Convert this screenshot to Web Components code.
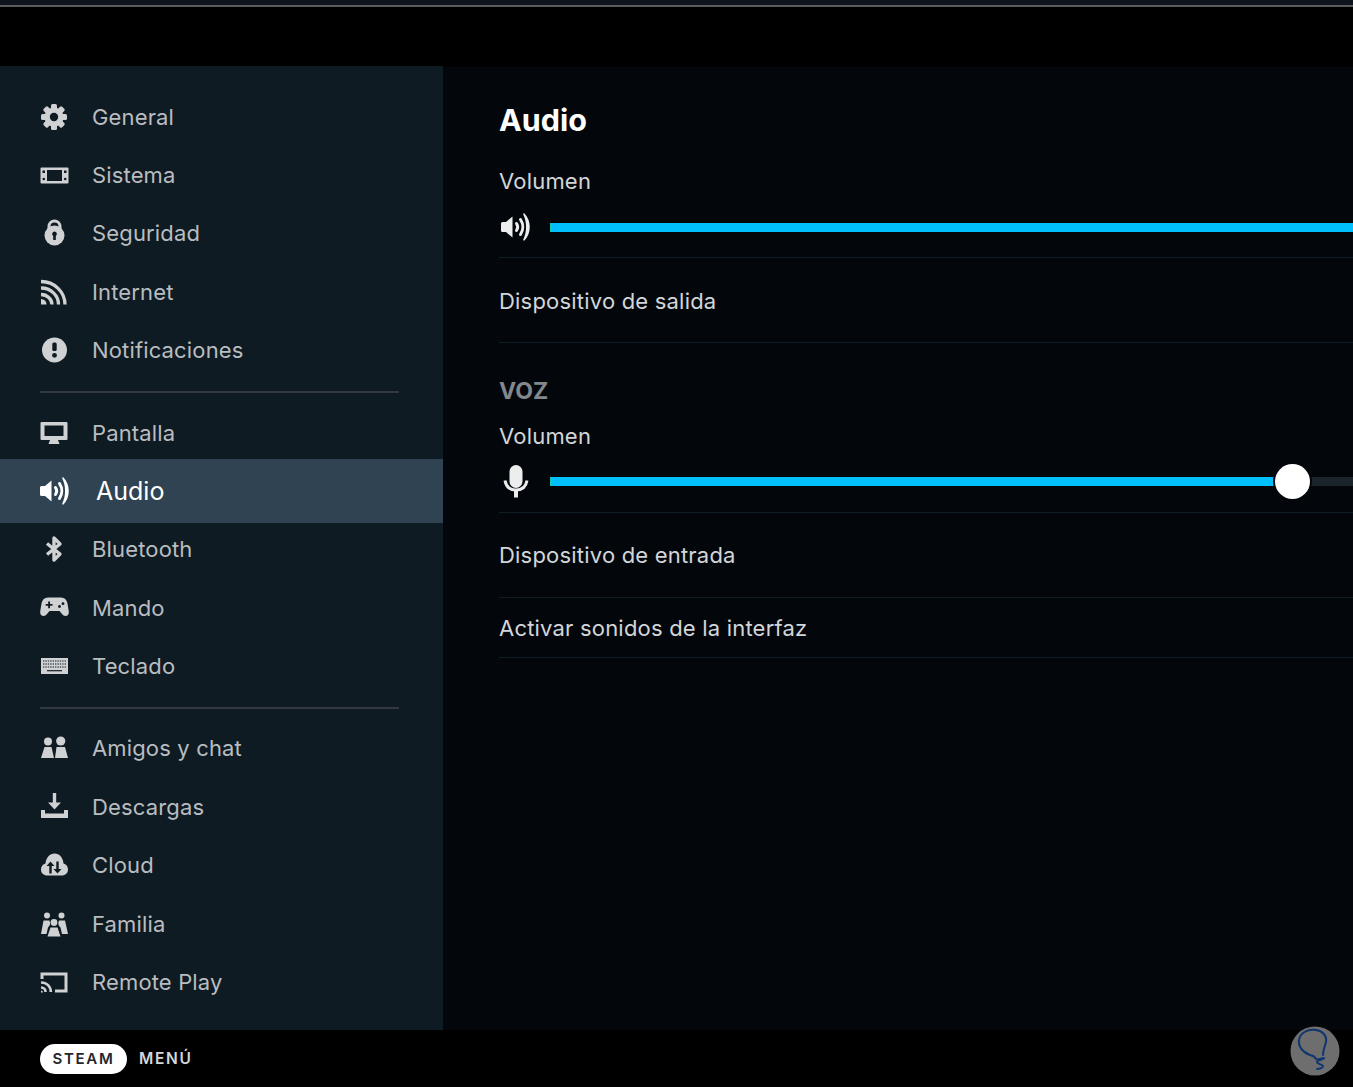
<!DOCTYPE html>
<html lang="es">
<head>
<meta charset="utf-8">
<title>Audio</title>
<style>
  html, body { margin: 0; padding: 0; background: #000; }
  body { font-family: Inter, "Noto Sans", "Liberation Sans", sans-serif; overflow: hidden; }
</style>
</head>
<body>
<script>
const ICONS = {
  general: `<g fill="currentColor"><circle cx="14" cy="14" r="9.6"/><rect x="11" y="1" width="6" height="26" rx="1.5"/><rect x="11" y="1" width="6" height="26" rx="1.5" transform="rotate(45 14 14)"/><rect x="11" y="1" width="6" height="26" rx="1.5" transform="rotate(90 14 14)"/><rect x="11" y="1" width="6" height="26" rx="1.5" transform="rotate(135 14 14)"/></g><circle cx="14" cy="14" r="4.2" fill="var(--hole)"/>`,
  sistema: `<path fill="currentColor" fill-rule="evenodd" d="M1.5 6.5h26a1 1 0 0 1 1 1v14a1 1 0 0 1-1 1h-26a1 1 0 0 1-1-1v-14a1 1 0 0 1 1-1zM7 9v11h15V9z"/><g fill="var(--hole)"><rect x="2.5" y="9.5" width="2.5" height="2.5"/><circle cx="3.8" cy="18" r="1.3"/><rect x="24" y="9.5" width="2.5" height="2.5"/><circle cx="25.2" cy="18" r="1.3"/></g>`,
  seguridad: `<path fill="none" stroke="currentColor" stroke-width="3" d="M9 12V7.5a5.5 5.5 0 0 1 11 0V12"/><circle cx="14.5" cy="16.5" r="10" fill="currentColor"/><path fill="var(--hole)" d="M14.5 12.5a2.4 2.4 0 0 1 1.3 4.4V21h-2.6v-4.1a2.4 2.4 0 0 1 1.3-4.4z"/>`,
  internet: `<g fill="none" stroke="currentColor" stroke-width="3.3"><path d="M1 3.5c13.5 0 24 10.5 24 23"/><path d="M1 10c10 0 17.5 7.5 17.5 16.5"/><path d="M1 16.5c6 0 11 4.5 11 10"/></g><path fill="currentColor" d="M1 21a5.5 5.5 0 0 1 5.5 5.5H1z"/>`,
  notif: `<circle cx="14.5" cy="14" r="12.5" fill="currentColor"/><rect x="12.3" y="6.5" width="4.4" height="8.5" rx="1.5" fill="var(--hole)"/><circle cx="14.5" cy="19.3" r="2.4" fill="var(--hole)"/>`,
  pantalla: `<path fill="currentColor" fill-rule="evenodd" d="M1.5 3h25a1 1 0 0 1 1 1v16a1 1 0 0 1-1 1H18l1.5 4h-11L10 21H1.5a1 1 0 0 1-1-1V4a1 1 0 0 1 1-1zM4.5 6.5V17h19V6.5z"/>`,
  audio: `<path fill="currentColor" d="M1.5 9H5l6.5-5.5v21L5 19H1.5A1.5 1.5 0 0 1 0 17.5v-7A1.5 1.5 0 0 1 1.500 9z"/><g fill="none" stroke="currentColor" stroke-linecap="round" stroke-width="3"><path d="M15.5 10.5c1.500 2.200 1.500 4.800 0 7"/><path d="M19.5 6.500c3 4.500 3 10.500 0 15"/></g><path fill="currentColor" d="M23.5.5C30.500 8 30.500 20 23.500 27.500c-.6.400-1.500-.2-1.200-1C26 19 26 9 22.300 1.500c-.3-.8.6-1.400 1.200-1z"/>`,
  bluetooth: `<path fill="none" stroke="currentColor" stroke-width="3.4" stroke-linejoin="round" d="M7 8.5 20 19l-6 6V3l6 6L7 19.5"/>`,
  mando: `<path fill="currentColor" d="M8 3.500h13c3.500 0 5.700 2 6.500 6l1.300 8c.4 2.700-1.100 4.500-3.300 4.500-1.500 0-2.500-.8-3.500-2l-2.500-3H9.500l-2.500 3c-1 1.200-2 2-3.500 2-2.200 0-3.700-1.800-3.300-4.500l1.300-8c.8-4 3-6 6.500-6z"/><path fill="var(--hole)" d="M8.200 7.500h1.800v2.500h2.500v1.800H10v2.500H8.200v-2.500H5.700V10h2.500z"/><circle cx="19.500" cy="12.500" r="1.400" fill="var(--hole)"/><circle cx="23" cy="9.700" r="1.400" fill="var(--hole)"/>`,
  teclado: `<rect x="1" y="6" width="27" height="16" fill="currentColor"/><g stroke="var(--hole)" stroke-width="1.1" stroke-dasharray="1.4 1"><path d="M3 9h23M3 12h23M3 15h23"/></g><path stroke="var(--hole)" stroke-width="1.2" d="M7 18.700h15"/>`,
  amigos: `<g fill="currentColor"><circle cx="8" cy="7.500" r="4"/><circle cx="20.700" cy="7" r="4.600"/><path d="M4.500 13h7l2.500 11H1zM16.500 13h8.500L28 24H15z"/></g>`,
  descargas: `<g fill="currentColor"><path d="M12.800 0h3.400v9.500H21L14.500 16.500 8 9.500h4.800z"/><path d="M1 17h4v3.500h19V17h4v8H1z"/></g>`,
  cloud: `<g transform="translate(0 -1.500)"><path fill="currentColor" d="M7.500 26C3.500 26 1 23.500 1 20c0-3.200 2-5.500 4.500-6C6 8 10 4 14.500 4c5 0 8.500 4 9 10 2.500.5 4.500 2.800 4.500 6 0 3.500-2.500 6-6.500 6z"/><path fill="var(--hole)" d="M10.500 12l4 4.500h-2.800V24H9.300v-7.500H6.500zM17.500 24l-4-4.500h2.800V12h2.400v7.500h2.800z"/></g>`,
  familia: `<g fill="currentColor"><circle cx="7" cy="5.500" r="3"/><circle cx="21.500" cy="5.500" r="3"/><circle cx="14" cy="12.500" r="3.400"/><path d="M3.500 10.500h6l.6 2.500c.3 2-1 3-2.100 4.500l-1.500 6.500H1z"/><path d="M25 10.500h-6l-.6 2.500c-.3 2 1 3 2.100 4.500l1.500 6.500H28z"/><path d="M10.500 17.500h7l3 9h-13z"/></g>`,
  remote: `<g fill="none" stroke="currentColor"><path stroke-width="3" d="M2 11V6h24v17H15"/><path stroke-width="2.600" d="M1 14.500c5.800 0 9.800 4 9.800 9.500"/><path stroke-width="2.600" d="M1 19.500c2.600 0 4.500 1.800 4.500 4.500"/></g><path fill="currentColor" d="M1 22.500a2 2 0 0 1 2 2H1z"/>`,
  mic: `<rect x="6.500" y="0" width="13" height="23" rx="6.500" fill="currentColor"/><path fill="none" stroke="currentColor" stroke-width="3" d="M2 15.500c1 6 5 9.500 11 9.500s10-3.500 11-9.500"/><path fill="currentColor" d="M11 24h4v8.500h-4z"/>`
};

class SteamIcon extends HTMLElement {
  static get observedAttributes() { return ['name']; }

  constructor() {
    super();
    this.attachShadow({ mode: 'open' });
  }

  attributeChangedCallback() {
    const name = this.getAttribute('name');
    const mic = name === 'mic';
    const w = mic ? 26 : 29;
    const h = mic ? 33 : 28;
    this.shadowRoot.innerHTML = `
      <style>
        :host { display: block; width: ${w}px; height: ${h}px; line-height: 0; }
        svg { display: block; overflow: visible; }
      </style>
      <svg width="${w}" height="${h}" viewBox="0 0 ${w} ${h}">${ICONS[name] || ''}</svg>`;
  }
}
customElements.define('steam-icon', SteamIcon);

class NavItem extends HTMLElement {
  constructor() {
    super();
    this.attachShadow({ mode: 'open' });
    this.shadowRoot.innerHTML = `
      <style>
        :host {
          display: flex;
          align-items: center;
          height: 58.4px;
          padding-left: 40px;
          gap: 23px;
          color: #b9bdc0;
          font-size: 22px;
          letter-spacing: .15px;
          --hole: #0f1b23;
        }
        :host([active]) {
          height: 64px;
          margin: -2.8px 0;
          position: relative;
          background: #2f4352;
          color: #fff;
          font-size: 25px;
          letter-spacing: 0;
          gap: 27px;
          --hole: #2f4352;
        }
        steam-icon { color: #cfd1d2; flex: none; }
        :host([active]) steam-icon { color: #fff; }
      </style>
      <steam-icon></steam-icon>
      <slot></slot>`;
    this.shadowRoot.querySelector('steam-icon').setAttribute('name', this.getAttribute('icon'));
  }
}
customElements.define('nav-item', NavItem);

class NavDivider extends HTMLElement {
  constructor() {
    super();
    this.attachShadow({ mode: 'open' });
    this.shadowRoot.innerHTML = `
      <style>
        :host { display: block; height: 2px; margin: 11.6px 44px 10.4px 40px; background: #33393f; }
      </style>`;
  }
}
customElements.define('nav-divider', NavDivider);

class SideNav extends HTMLElement {
  constructor() {
    super();
    this.attachShadow({ mode: 'open' });
    this.shadowRoot.innerHTML = `
      <style>
        :host {
          display: block;
          flex: none;
          width: 443px;
          padding-top: 21.4px;
          box-sizing: border-box;
          background: #0f1b23;
        }
      </style>
      <slot></slot>`;
  }
}
customElements.define('side-nav', SideNav);

class VolumeSlider extends HTMLElement {
  constructor() {
    super();
    this.attachShadow({ mode: 'open' });
    this.shadowRoot.innerHTML = `
      <style>
        :host {
          display: block;
          padding-bottom: 12px;
          border-bottom: 1px solid #0f1d26;
          color: #d3d6d8;
          font-size: 22px;
          line-height: 28px;
          letter-spacing: .2px;
          --hole: #03070c;
        }
        .control { display: flex; align-items: center; height: 36px; margin-top: var(--gap, 14px); }
        .slot { width: 51px; flex: none; display: flex; }
        steam-icon { color: #eceeee; }
        .track { flex: 1; height: 9px; position: relative; background: #19242b; }
        .fill { height: 100%; background: #00bfff; border-left: 2px solid #17c9b4; box-sizing: border-box; }
        .thumb {
          position: absolute;
          top: 50%;
          width: 35px;
          height: 35px;
          margin: -17.5px 0 0 -17.5px;
          border-radius: 50%;
          background: #fff;
          box-shadow: 0 0 0 2px #03070c;
        }
      </style>
      <div class="label"><slot></slot></div>
      <div class="control">
        <div class="slot"><steam-icon></steam-icon></div>
        <div class="track"><div class="fill"></div><div class="thumb"></div></div>
      </div>`;
    const icon = this.shadowRoot.querySelector('steam-icon');
    icon.setAttribute('name', this.getAttribute('icon'));
    icon.style.marginLeft = this.getAttribute('icon') === 'mic' ? '4px' : '2px';
    const fill = this.shadowRoot.querySelector('.fill');
    const thumb = this.shadowRoot.querySelector('.thumb');
    const at = this.getAttribute('thumb');
    if (at) {
      fill.style.width = (+at - 17) + 'px';
      thumb.style.left = at + 'px';
    } else {
      fill.style.width = '100%';
      thumb.style.display = 'none';
    }
  }
}
customElements.define('volume-slider', VolumeSlider);

class SettingRow extends HTMLElement {
  constructor() {
    super();
    this.attachShadow({ mode: 'open' });
    this.shadowRoot.innerHTML = `
      <style>
        :host {
          display: flex;
          align-items: center;
          box-sizing: border-box;
          border-bottom: 1px solid #0f1d26;
          color: #d3d6d8;
          font-size: 22px;
          letter-spacing: .2px;
        }
      </style>
      <slot></slot>`;
  }
}
customElements.define('setting-row', SettingRow);

class AudioPanel extends HTMLElement {
  constructor() {
    super();
    this.attachShadow({ mode: 'open' });
    this.shadowRoot.innerHTML = `
      <style>
        :host {
          display: block;
          flex: 1;
          min-width: 0;
          margin-top: 1px;
          padding: 35px 0 0 56px;
          background: #03070c;
          overflow: hidden;
        }
        h1 { margin: 0; font-size: 30.5px; line-height: 36px; font-weight: 700; color: #fff; }
        h2 {
          margin: 34px 0 17px;
          font-size: 23px;
          line-height: 28px;
          font-weight: 700;
          color: #83888c;
          text-transform: uppercase;
        }
        .first { margin-top: 29px; }
        .out { height: 85px; padding-top: 1px; }
        .in { height: 85px; }
        .ui { height: 60px; }
        .second { --gap: 13px; padding-bottom: 13px; }
      </style>
      <h1>Audio</h1>
      <volume-slider class="first" icon="audio">Volumen</volume-slider>
      <setting-row class="out">Dispositivo de salida</setting-row>
      <h2>Voz</h2>
      <volume-slider class="second" icon="mic" thumb="742.5">Volumen</volume-slider>
      <setting-row class="in">Dispositivo de entrada</setting-row>
      <setting-row class="ui">Activar sonidos de la interfaz</setting-row>`;
  }
}
customElements.define('audio-panel', AudioPanel);

class FooterBar extends HTMLElement {
  constructor() {
    super();
    this.attachShadow({ mode: 'open' });
    this.shadowRoot.innerHTML = `
      <style>
        :host {
          display: flex;
          align-items: center;
          flex: 1;
          gap: 12px;
          padding-left: 40px;
          background: #000;
          position: relative;
          color: #d5d7d8;
          font-size: 15.5px;
          font-weight: 600;
          letter-spacing: 1.7px;
        }
        .pill {
          display: flex;
          align-items: center;
          justify-content: center;
          width: 87px;
          height: 30px;
          border-radius: 15px;
          background: #fff;
          color: #23262b;
          font-size: 15px;
          letter-spacing: 1.7px;
        }
        .mark { position: absolute; right: 13px; top: -4px; width: 50px; height: 50px; }
      </style>
      <span class="pill">STEAM</span>
      <span>MENÚ</span>
      <svg class="mark" viewBox="0 0 50 50">
        <circle cx="25" cy="25" r="24.5" fill="#6e6e6e"/>
        <path fill="none" stroke="#10356f" stroke-width="2" stroke-linecap="round" stroke-linejoin="round"
          d="M20 29C12 26 8 20 9 14 10 7 17 3 26 4c7 1 11 6 10 12-1 4-3 8-3 13M20 29c3 .5 5 2 6 4 1 1 8-1 8-1 1 1-7 2-7 4 0 2 5 2 6 4 0 2-4 3-6 3"/>
      </svg>`;
  }
}
customElements.define('footer-bar', FooterBar);

class DeckScreen extends HTMLElement {
  constructor() {
    super();
    this.attachShadow({ mode: 'open' });
    this.shadowRoot.innerHTML = `
      <style>
        :host { display: flex; flex-direction: column; height: 1087px; background: #000; }
        .top { height: 66px; flex: none; background: #000; }
        .top div { height: 5px; background: #0e141b; border-bottom: 2px solid #5c5c5c; }
        .body { display: flex; height: 964px; flex: none; }
      </style>
      <div class="top"><div></div></div>
      <div class="body"><slot name="nav"></slot><audio-panel></audio-panel></div>
      <footer-bar></footer-bar>`;
  }
}
customElements.define('deck-screen', DeckScreen);

document.body.innerHTML = `
  <deck-screen>
    <side-nav slot="nav">
      <nav-item icon="general">General</nav-item>
      <nav-item icon="sistema">Sistema</nav-item>
      <nav-item icon="seguridad">Seguridad</nav-item>
      <nav-item icon="internet">Internet</nav-item>
      <nav-item icon="notif">Notificaciones</nav-item>
      <nav-divider></nav-divider>
      <nav-item icon="pantalla">Pantalla</nav-item>
      <nav-item icon="audio" active>Audio</nav-item>
      <nav-item icon="bluetooth">Bluetooth</nav-item>
      <nav-item icon="mando">Mando</nav-item>
      <nav-item icon="teclado">Teclado</nav-item>
      <nav-divider></nav-divider>
      <nav-item icon="amigos">Amigos y chat</nav-item>
      <nav-item icon="descargas">Descargas</nav-item>
      <nav-item icon="cloud">Cloud</nav-item>
      <nav-item icon="familia">Familia</nav-item>
      <nav-item icon="remote">Remote Play</nav-item>
    </side-nav>
  </deck-screen>`;
</script>
</body>
</html>
